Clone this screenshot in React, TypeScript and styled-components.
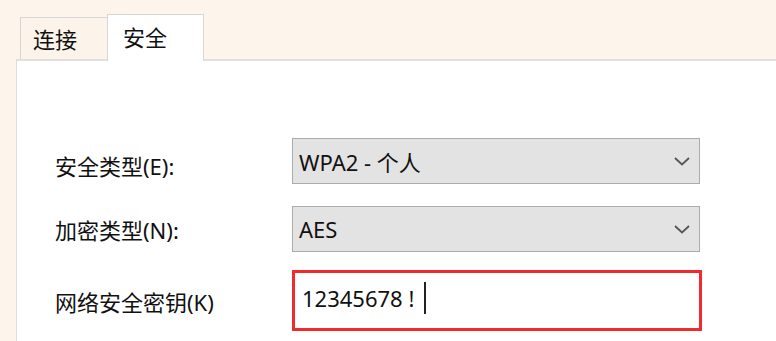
import React from 'react';
import styled, { createGlobalStyle } from 'styled-components';

const GlobalStyle = createGlobalStyle`
  html, body {
    margin: 0;
    padding: 0;
    background: #fdf5ec;
  }
  body {
    font-family: "Noto Sans", "Noto Sans CJK SC", sans-serif;
    color: #111;
  }
`;

interface IField {
  label: string;
  labelOffset?: number;
}

const ChevronIcon = () => (
  <svg width="16" height="9" viewBox="0 0 16 9">
    <path d="M1 1 L8 7.5 L15 1" fill="none" stroke="#555" strokeWidth="1.8" />
  </svg>
);

const Select: React.FC<{ value: string }> = ({ value }) => (
  <SSelect>
    <SSelectValue>{value}</SSelectValue>
    <ChevronIcon />
  </SSelect>
);

const Field: React.FC<React.PropsWithChildren<IField>> = ({ label, labelOffset = 0, children }) => (
  <SRow>
    <SLabel $offset={labelOffset}>{label}</SLabel>
    {children}
  </SRow>
);

export default function App() {
  return (
    <SWindow>
      <GlobalStyle />
      <STabStrip>
        <STab>连接</STab>
        <STab $active>安全</STab>
      </STabStrip>
      <SPanel>
        <SForm>
          <Field label="安全类型(E):" labelOffset={4}>
            <Select value="WPA2 - 个人" />
          </Field>
          <Field label="加密类型(N):">
            <Select value="AES" />
          </Field>
          <Field label="网络安全密钥(K)">
            <SKeyInput>
              <span>12345678 !</span>
              <SCaret />
            </SKeyInput>
          </Field>
        </SForm>
      </SPanel>
    </SWindow>
  );
}

const SWindow = styled.div`
  width: 776px;
  height: 341px;
  display: flex;
  flex-direction: column;
  overflow: hidden;
  background: #fdf5ec;
`;

const STabStrip = styled.div`
  height: 59px;
  display: flex;
  align-items: flex-end;
  padding-left: 20px;
  position: relative;
  z-index: 1;
`;

const STab = styled.div<{ $active?: boolean }>`
  box-sizing: border-box;
  font-size: 22px;
  line-height: 1;
  height: ${({ $active }) => ($active ? '47px' : '42px')};
  margin-bottom: ${({ $active }) => ($active ? '-2px' : '0')};
  width: ${({ $active }) => ($active ? '97px' : '87px')};
  padding: ${({ $active }) => ($active ? '11px 0 0 15px' : '10px 0 0 12px')};
  background: ${({ $active }) => ($active ? '#ffffff' : '#fcf4ea')};
  border: 1px solid #d6d6d6;
  border-bottom: none;
  border-right: ${({ $active }) => ($active ? '1px solid #d6d6d6' : 'none')};
  color: #111;
`;

const SPanel = styled.div`
  flex: 1;
  margin-left: 16px;
  background: #ffffff;
  border-left: 1px solid #dcdcdc;
  border-top: 2px solid #e2e0dd;
`;

const SForm = styled.div`
  display: flex;
  flex-direction: column;
  gap: 22px;
  padding: 77px 0 0 38px;
`;

const SRow = styled.div`
  display: flex;
  align-items: center;
  &:last-child {
    margin-top: -4px;
  }
`;

const SLabel = styled.div<{ $offset: number }>`
  width: 237px;
  font-size: 22px;
  position: relative;
  top: ${({ $offset }) => $offset}px;
  white-space: nowrap;
`;

const SSelect = styled.div`
  box-sizing: border-box;
  width: 408px;
  height: 46px;
  display: flex;
  align-items: center;
  justify-content: space-between;
  padding: 0 9px 0 6px;
  background: #e3e3e3;
  border: 1px solid #ababab;
`;

const SSelectValue = styled.span`
  font-size: 22px;
  color: #111;
`;

const SKeyInput = styled.div`
  box-sizing: border-box;
  width: 410px;
  height: 61px;
  display: flex;
  align-items: center;
  padding: 0 0 6px 7px;
  border: 3px solid #f22a2e;
  background: #ffffff;
  font-size: 22px;
  color: #111;
`;

const SCaret = styled.span`
  display: inline-block;
  width: 2px;
  height: 32px;
  margin-left: 10px;
  background: #222;
`;
